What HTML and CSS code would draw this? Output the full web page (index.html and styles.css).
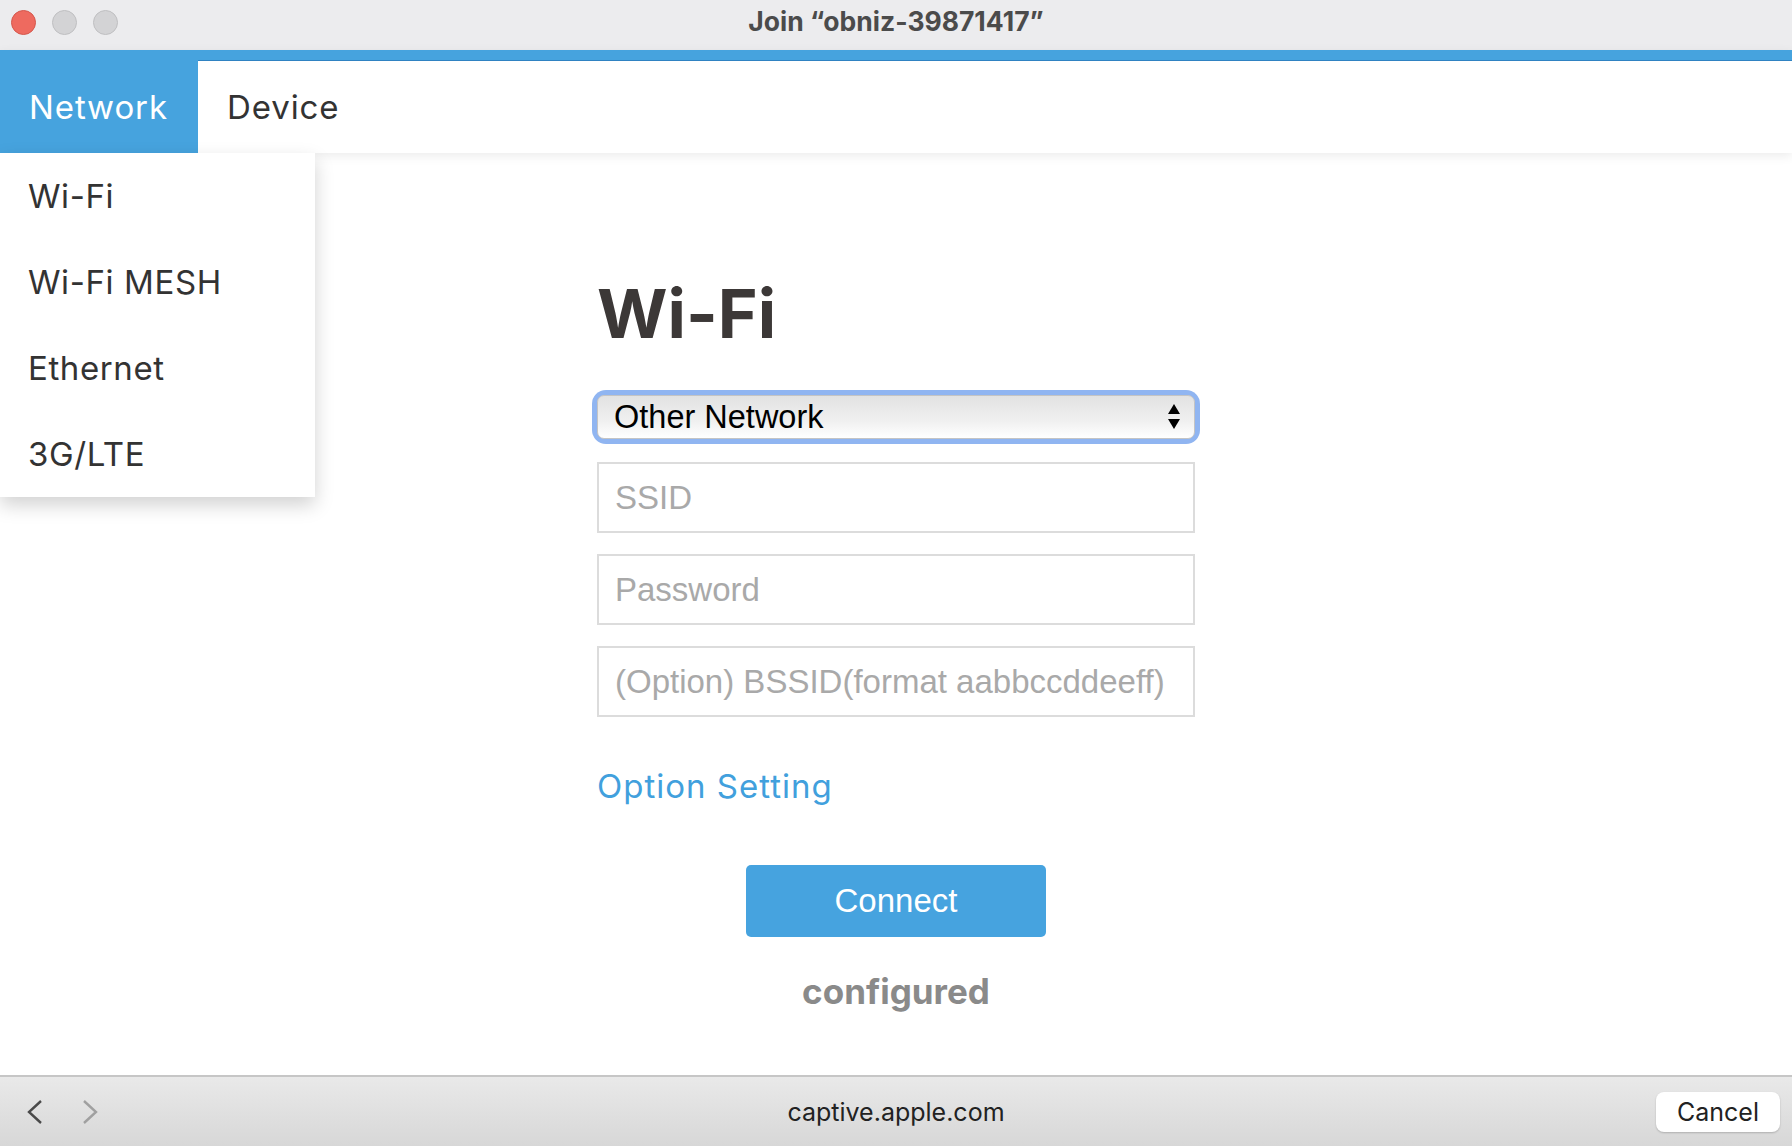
FILE: index.html
```html
<!DOCTYPE html>
<html lang="en">
<head>
    <meta charset="UTF-8">
    <meta name="viewport" content="width=device-width, initial-scale=1.0">
    <title>Join obniz-39871417</title>
    <link rel="stylesheet" href="styles.css">
</head>
<body>
    <div class="window">
        <div class="titlebar">
            <div class="lights">
                <span class="light red"></span>
                <span class="light"></span>
                <span class="light"></span>
            </div>
            <div class="title">Join “obniz-39871417”</div>
            <div></div>
        </div>

        <nav class="topnav">
            <a class="tab active">Network</a>
            <a class="tab">Device</a>
        </nav>

        <div class="page">
            <ul class="menu">
                <li>Wi-Fi</li>
                <li>Wi-Fi MESH</li>
                <li>Ethernet</li>
                <li>3G/LTE</li>
            </ul>

            <form class="wifi-form">
                <h1>Wi-Fi</h1>
                <div class="select-wrap">
                    <select class="network-select">
                        <option>Other Network</option>
                    </select>
                    <svg class="select-arrows" width="16" height="28" viewBox="0 0 16 28">
                        <path d="M8 1 L14 11 L2 11 Z" fill="#000"/>
                        <path d="M2 16 L14 16 L8 26 Z" fill="#000"/>
                    </svg>
                </div>
                <input type="text" class="field first" placeholder="SSID">
                <input type="password" class="field" placeholder="Password">
                <input type="text" class="field" placeholder="(Option) BSSID(format aabbccddeeff)">
                <a class="option-link">Option Setting</a>
                <button type="button" class="connect-btn">Connect</button>
                <p class="status">configured</p>
            </form>
        </div>

        <div class="bottombar">
            <div class="history">
                <svg width="20" height="26" viewBox="0 0 20 26">
                    <polyline points="15,2 3,13 15,24" fill="none" stroke="#4a4a4a" stroke-width="2.4"/>
                </svg>
                <svg width="20" height="26" viewBox="0 0 20 26">
                    <polyline points="4,2 16,13 4,24" fill="none" stroke="#a0a0a0" stroke-width="2.4"/>
                </svg>
            </div>
            <div class="address">captive.apple.com</div>
            <div class="actions">
                <button type="button" class="cancel-btn">Cancel</button>
            </div>
        </div>
    </div>
</body>
</html>
```

FILE: styles.css
```css
* {
    box-sizing: border-box;
}
body {
    margin: 0;
    background: #fff;
    font-family: Inter, "Open Sans", sans-serif;
}
.window {
    width: 1792px;
    height: 1146px;
    display: flex;
    flex-direction: column;
    overflow: hidden;
}

/* mac title bar */
.titlebar {
    height: 50px;
    flex: none;
    background-color: #ececee;
    display: grid;
    grid-template-columns: 1fr auto 1fr;
    align-items: center;
}
.lights {
    display: flex;
    gap: 16px;
    padding-left: 11px;
    padding-bottom: 6px;
}
.light {
    width: 25px;
    height: 25px;
    border-radius: 50%;
    background-color: #d3d3d5;
    border: 1px solid #bfbfc1;
}
.light.red {
    background-color: #ee6a5f;
    border-color: #d5574c;
}
.title {
    font-family: Inter, sans-serif;
    font-weight: 700;
    font-size: 26.5px;
    color: #4b4b4b;
    padding-bottom: 8px;
}

/* top navigation */
.topnav {
    flex: none;
    height: 103px;
    border-top: 10px solid #46a3de;
    box-shadow: inset 0 1px 0 #2f82c2, 0 3px 10px rgba(0, 0, 0, 0.08);
    display: flex;
    position: relative;
    z-index: 2;
    background: #fff;
}
.tab {
    display: flex;
    align-items: center;
    padding: 0 32px 0 29px;
    font-size: 33px;
    letter-spacing: 0.9px;
    color: #333;
}
.tab.active {
    width: 198px;
    background-color: #46a3de;
    color: #fff;
}

.page {
    flex: 1;
    position: relative;
}
.menu {
    position: absolute;
    top: 0;
    left: 0;
    width: 315px;
    margin: 0;
    padding: 0;
    list-style: none;
    background: #fff;
    box-shadow: 0 8px 18px rgba(0, 0, 0, 0.18);
    z-index: 3;
}
.menu li {
    height: 86px;
    display: flex;
    align-items: center;
    padding-left: 28px;
    font-size: 33px;
    letter-spacing: 0.6px;
    color: #333;
}

/* wifi form */
.wifi-form {
    width: 598px;
    margin: 0 auto;
    padding-top: 126px;
    display: flex;
    flex-direction: column;
}
.wifi-form h1 {
    margin: 0;
    font-size: 68px;
    line-height: 68px;
    font-weight: 700;
    color: #3c3837;
}
.select-wrap {
    position: relative;
    margin-top: 48px;
    border-radius: 9px;
    box-shadow: 0 0 0 5px #90b5f1;
}
.network-select {
    -webkit-appearance: none;
    appearance: none;
    width: 100%;
    height: 44px;
    border: 1px solid #c4c4c4;
    border-radius: 7px;
    background: linear-gradient(#e2e2e2, #f0f0f0 60%, #fff);
    font-family: "Liberation Sans", Arial, sans-serif;
    font-size: 32.5px;
    color: #000;
    padding: 0 16px;
}
.select-arrows {
    position: absolute;
    right: 13px;
    top: 8px;
}
.field {
    height: 71px;
    margin-top: 21px;
    border: 2px solid #dcdcdc;
    padding: 0 16px;
    font-family: "Liberation Sans", Arial, sans-serif;
    font-size: 33px;
    color: #333;
}
.field.first {
    margin-top: 23px;
}
.field::placeholder {
    color: #a9a9a9;
}
.option-link {
    margin-top: 49px;
    font-size: 33px;
    line-height: 40px;
    letter-spacing: 1px;
    color: #41a0dd;
}
.connect-btn {
    align-self: center;
    width: 300px;
    height: 72px;
    margin-top: 59px;
    border: none;
    border-radius: 5px;
    background-color: #46a3df;
    color: #fff;
    font-family: "Liberation Sans", Arial, sans-serif;
    font-size: 33px;
}
.status {
    margin: 34px 0 0;
    text-align: center;
    font-size: 35px;
    line-height: 40px;
    font-weight: 700;
    color: #8a8a8a;
}

/* safari bottom bar */
.bottombar {
    flex: none;
    height: 71px;
    border-top: 2px solid #c6c6c6;
    background: linear-gradient(#e9e9e9, #d7d7d7);
    display: grid;
    grid-template-columns: 1fr auto 1fr;
    align-items: center;
}
.history {
    display: flex;
    gap: 34px;
    padding-left: 26px;
}
.address {
    font-family: Inter, sans-serif;
    font-size: 25px;
    color: #222;
}
.actions {
    display: flex;
    justify-content: flex-end;
    padding-right: 12px;
}
.cancel-btn {
    width: 124px;
    height: 40px;
    border: none;
    border-radius: 8px;
    background: #fff;
    box-shadow: 0 1px 2px rgba(0, 0, 0, 0.2);
    font-family: Inter, sans-serif;
    font-size: 25px;
    color: #222;
}
```
